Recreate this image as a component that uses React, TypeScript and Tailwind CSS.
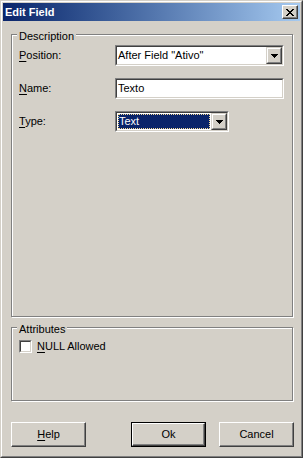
import React from "react";

function DropButton() {
  return (
    <div className="w-[16px] h-full border border-t-[#d4d0c8] border-l-[#d4d0c8] border-b-[#404040] border-r-[#404040] bg-[#d4d0c8]">
      <div className="w-full h-full border border-t-white border-l-white border-b-[#808080] border-r-[#808080] flex items-center justify-center">
        <svg width="7" height="4" viewBox="0 0 7 4" shapeRendering="crispEdges">
          <rect x="0" y="0" width="7" height="1" fill="#000" />
          <rect x="1" y="1" width="5" height="1" fill="#000" />
          <rect x="2" y="2" width="3" height="1" fill="#000" />
          <rect x="3" y="3" width="1" height="1" fill="#000" />
        </svg>
      </div>
    </div>
  );
}

function Sunken({ className, children }: { className: string; children: React.ReactNode }) {
  return (
    <div className={`border border-t-[#808080] border-l-[#808080] border-b-white border-r-white ${className}`}>
      <div className="w-full h-full border border-t-[#404040] border-l-[#404040] border-b-[#d4d0c8] border-r-[#d4d0c8] bg-white flex">
        {children}
      </div>
    </div>
  );
}

function GroupBox({ label, className, children }: { label: string; className: string; children?: React.ReactNode }) {
  return (
    <div
      className={`relative w-[282px] border border-[#808080] shadow-[inset_1px_1px_0_#fff,1px_1px_0_#fff] ${className}`}
    >
      <span className="absolute left-[5px] -top-[5px] px-[2px] bg-[#d4d0c8] leading-[13px]">{label}</span>
      {children}
    </div>
  );
}

function Button({ children, isDefault }: { children: React.ReactNode; isDefault?: boolean }) {
  if (isDefault) {
    return (
      <div className="w-[75px] h-[25px] border border-black">
        <div className="w-full h-full border border-t-white border-l-white border-b-[#404040] border-r-[#404040] shadow-[inset_-1px_-1px_0_#808080] flex items-center justify-center">
          {children}
        </div>
      </div>
    );
  }
  return (
    <div className="w-[75px] h-[25px] border border-t-white border-l-white border-b-[#404040] border-r-[#404040] shadow-[inset_-1px_-1px_0_#808080] flex items-center justify-center">
      {children}
    </div>
  );
}

export default function App() {
  return (
    <div className="w-[303px] h-[458px] [font-family:'Liberation_Sans',Arial,sans-serif] text-[11px] leading-[13px] text-black">
      <div className="w-full h-full border border-t-[#d4d0c8] border-l-[#d4d0c8] border-b-[#404040] border-r-[#404040] bg-[#d4d0c8]">
        <div className="w-full h-full border border-t-white border-l-white border-b-[#808080] border-r-[#808080] p-[1px] flex flex-col">
          {/* Title bar */}
          <div className="h-[18px] bg-gradient-to-r from-[#0a246a] to-[#a6caf0] flex items-center justify-between pl-[2px] pr-[2px]">
            <span className="text-white font-bold leading-[13px]">Edit Field</span>
            <div className="w-[16px] h-[14px] border border-t-white border-l-white border-b-[#404040] border-r-[#404040] shadow-[inset_-1px_-1px_0_#808080] bg-[#d4d0c8] flex items-center justify-center">
              <svg width="8" height="7" viewBox="0 0 8 7" shapeRendering="crispEdges">
                <rect x="0" y="0" width="2" height="1" fill="#000" />
                <rect x="6" y="0" width="2" height="1" fill="#000" />
                <rect x="1" y="1" width="2" height="1" fill="#000" />
                <rect x="5" y="1" width="2" height="1" fill="#000" />
                <rect x="2" y="2" width="4" height="1" fill="#000" />
                <rect x="3" y="3" width="2" height="1" fill="#000" />
                <rect x="2" y="4" width="4" height="1" fill="#000" />
                <rect x="1" y="5" width="2" height="1" fill="#000" />
                <rect x="5" y="5" width="2" height="1" fill="#000" />
                <rect x="0" y="6" width="2" height="1" fill="#000" />
                <rect x="6" y="6" width="2" height="1" fill="#000" />
              </svg>
            </div>
          </div>

          {/* Body */}
          <div className="flex flex-col pl-[8px] pt-[13px]">
            <GroupBox label="Description" className="h-[283px]">
              <div className="flex flex-col gap-[12px] pt-[10px] pl-[7px]">
                <div className="flex items-center">
                  <span className="w-[96px]">
                    <span className="underline underline-offset-[2px]">P</span>osition:
                  </span>
                  <Sunken className="w-[169px] h-[21px]">
                    <span className="flex-1 pl-[1px] self-center">After Field "Ativo"</span>
                    <DropButton />
                  </Sunken>
                </div>
                <div className="flex items-center">
                  <span className="w-[96px]">
                    <span className="underline underline-offset-[2px]">N</span>ame:
                  </span>
                  <Sunken className="w-[169px] h-[21px]">
                    <span className="flex-1 pl-[1px] self-center">Texto</span>
                  </Sunken>
                </div>
                <div className="flex items-center">
                  <span className="w-[96px]">
                    <span className="underline underline-offset-[2px]">T</span>ype:
                  </span>
                  <Sunken className="w-[114px] h-[21px]">
                    <div className="flex-1 p-[1px] flex">
                      <div className="flex-1 bg-[#0a246a] border border-dotted border-[#f5db95] flex items-center text-white">
                        <span>Text</span>
                      </div>
                    </div>
                    <DropButton />
                  </Sunken>
                </div>
              </div>
            </GroupBox>

            <GroupBox label="Attributes" className="mt-[10px] h-[74px]">
              <div className="flex items-center pt-[12px] pl-[7px]">
                <div className="w-[13px] h-[13px] border border-t-[#808080] border-l-[#808080] border-b-white border-r-white">
                  <div className="w-full h-full border border-t-[#404040] border-l-[#404040] border-b-[#d4d0c8] border-r-[#d4d0c8] bg-white" />
                </div>
                <span className="ml-[5px]">
                  <span className="underline underline-offset-[2px]">N</span>ULL Allowed
                </span>
              </div>
            </GroupBox>

            <div className="mt-[21px] w-[283px] flex">
              <Button>
                <span>
                  <span className="underline underline-offset-[2px]">H</span>elp
                </span>
              </Button>
              <div className="ml-[45px]">
                <Button isDefault>Ok</Button>
              </div>
              <div className="ml-[13px]">
                <Button>Cancel</Button>
              </div>
            </div>
          </div>
        </div>
      </div>
    </div>
  );
}
